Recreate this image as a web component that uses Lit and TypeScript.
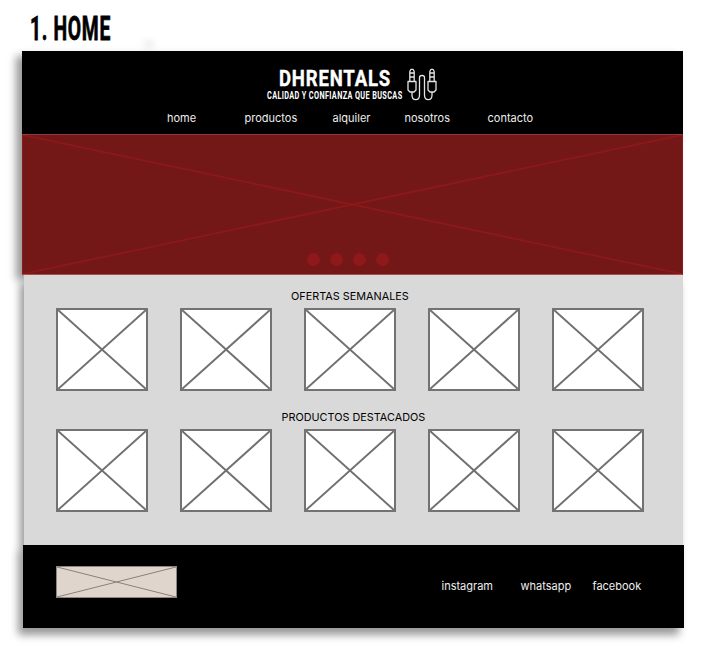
import { LitElement, html, svg, css } from "lit";
import { customElement, property } from "lit/decorators.js";

/** Crossed rectangle standing in for an image. */
@customElement("image-placeholder")
class ImagePlaceholder extends LitElement {
  static styles = css`
    :host { display: block; box-sizing: border-box; }
    svg { display: block; width: 100%; height: 100%; }
    line { stroke: var(--line, #716f6f); stroke-width: var(--stroke, 2); }
  `;
  render() {
    return html`<svg aria-hidden="true">
      ${svg`<line x1="0" y1="0" x2="100%" y2="100%"></line>
      <line x1="0" y1="100%" x2="100%" y2="0"></line>`}
    </svg>`;
  }
}

/** A single line of condensed lettering fitted to a width. */
@customElement("condensed-text")
class CondensedText extends LitElement {
  @property() text = "";
  @property({ type: Number }) size = 20;
  @property({ type: Number }) width = 100;
  @property({ type: Number }) weight = 700;
  @property({ type: Number }) spacing = 0;
  static styles = css`
    :host { display: block; }
    svg { display: block; overflow: visible; }
    text {
      font-family: Roboto, "Liberation Sans", sans-serif; fill: currentColor;
      stroke: currentColor; stroke-width: var(--embolden, 0);
    }
  `;
  render() {
    const cap = this.size * 0.711;
    return html`<svg width=${this.width} height=${cap}>
      <text x="0" y=${cap} font-size=${this.size} font-weight=${this.weight} letter-spacing=${this.spacing}
        textLength=${this.width} lengthAdjust="spacingAndGlyphs">${this.text}</text>
    </svg>`;
  }
}

@customElement("app-root")
class AppRoot extends LitElement {
  static styles = css`
    :host {
      display: block; box-sizing: border-box; width: 722px; height: 660px;
      padding: 16px 0 0 22px; overflow: hidden; background: #fff; color: #000;
      font: 11px/14px Inter, "Liberation Sans", sans-serif;
    }
    .title { height: 35px; padding-left: 8px; display: flex; --embolden: .8; }
    .smudge {
      width: 12px; height: 9px; margin: 24px 0 0 32px; border-radius: 50%;
      background: #eee; filter: blur(3px);
    }
    .top { width: 661px; box-shadow: -6px 5px 8px rgba(0, 0, 0, .4); position: relative; }
    header { height: 83px; box-sizing: border-box; padding-top: 17px; background: #000; color: #fff; }
    .brand { display: flex; margin-left: 245px; height: 43px; }
    .names { width: 140px; padding-top: 2px; }
    .names .tag { margin-top: 6px; }
    .names .name { margin-left: 12px; --embolden: .4; }
    .plug { width: 30px; height: 33px; fill: none; stroke: #e4e4e4; stroke-width: 1.3; stroke-linejoin: round; }
    nav { display: grid; color: #eee; }
    .menu { grid-template-columns: 77.5px 88px 72px 83px auto; padding-left: 145px; }
    .hero {
      height: 141px; position: relative; background: #741717; box-sizing: border-box;
      border: 1px solid #8b1a1c; border-top-color: #91383a; border-bottom-color: #a8504f;
    }
    .hero image-placeholder { height: 100%; --line: #8b191b; --stroke: 1.8; }
    .dots { position: absolute; left: 284px; bottom: 8px; display: flex; gap: 10px; }
    .dot { width: 13px; height: 13px; border-radius: 50%; background: #8f181b; }
    main {
      position: relative; width: 659px; height: 270px; margin-left: 2px; box-sizing: border-box;
      padding: 14px 0 0 32px; background: #d9d9d9;
      box-shadow: -4px 8px 8px rgba(0, 0, 0, .4);
    }
    h2 { margin: 0; font-size: 10.85px; line-height: 14px; font-weight: 400; white-space: nowrap; }
    .offers { padding-left: 235px; }
    .featured { padding-left: 225.5px; margin-top: 19px; }
    .row { display: flex; gap: 32px; margin-top: 5px; }
    .row image-placeholder { width: 92px; height: 83px; border: 2px solid #747272; background: #fff; }
    footer {
      position: relative; display: flex; box-sizing: border-box; width: 661px; height: 83px;
      margin-left: 1px; padding: 21px 0 0 33px; background: #000; color: #eee;
      box-shadow: -5px 7px 8px rgba(0, 0, 0, .4);
    }
    footer image-placeholder {
      width: 121px; height: 32px; background: #dfd5cd; border: 1px solid #8d8580;
      --line: #8a817c; --stroke: 1;
    }
    .social { grid-template-columns: 79px 72px auto; margin: 13px 0 0 264.5px; align-self: flex-start; }
  `;

  render() {
    const row = () => html`<div class="row">
      ${[0, 1, 2, 3, 4].map(() => html`<image-placeholder></image-placeholder>`)}
    </div>`;
    return html`
      <div class="title">
        <condensed-text text="1. HOME" size="33.5" width="81" weight="700" spacing="1.2"></condensed-text>
        <div class="smudge"></div>
      </div>
      <div class="top">
        <header>
          <div class="brand">
            <div class="names">
              <condensed-text class="name" text="DHRENTALS" size="22.5" width="112" weight="700" spacing="1"></condensed-text>
              <condensed-text class="tag" text="CALIDAD Y CONFIANZA QUE BUSCAS" size="10.2" width="135.5" weight="700" spacing="0.5"></condensed-text>
            </div>
            <svg class="plug" viewBox="0 0 30 33" aria-hidden="true">
              <path d="M2.8 13V3.5L4 1.3H6L7.2 3.5V13M2.8 5H7.2M2.8 9H7.2M1 13.5H9V22L7 24H3L1 22ZM5 24V27Q5 31.7 8.7 31.7Q12.5 31.7 12.5 27V9.5Q12.5 7.5 15 7.5Q17.5 7.5 17.5 9.5V27Q17.5 31.7 21.3 31.7Q25 31.7 25 27V24M22.8 13V3.5L24 1.3H26L27.2 3.5V13M22.8 5H27.2M22.8 9H27.2M21 13.5H29V22L27 24H23L21 22Z"></path>
            </svg>
          </div>
          <nav class="menu">
            <span>home</span><span>productos</span><span>alquiler</span><span>nosotros</span><span>contacto</span>
          </nav>
        </header>
        <section class="hero">
          <image-placeholder></image-placeholder>
          <div class="dots">${[0, 1, 2, 3].map(() => html`<span class="dot"></span>`)}</div>
        </section>
      </div>
      <main>
        <h2 class="offers">OFERTAS SEMANALES</h2>
        ${row()}
        <h2 class="featured">PRODUCTOS DESTACADOS</h2>
        ${row()}
      </main>
      <footer>
        <image-placeholder></image-placeholder>
        <nav class="social"><span>instagram</span><span>whatsapp</span><span>facebook</span></nav>
      </footer>
    `;
  }
}
